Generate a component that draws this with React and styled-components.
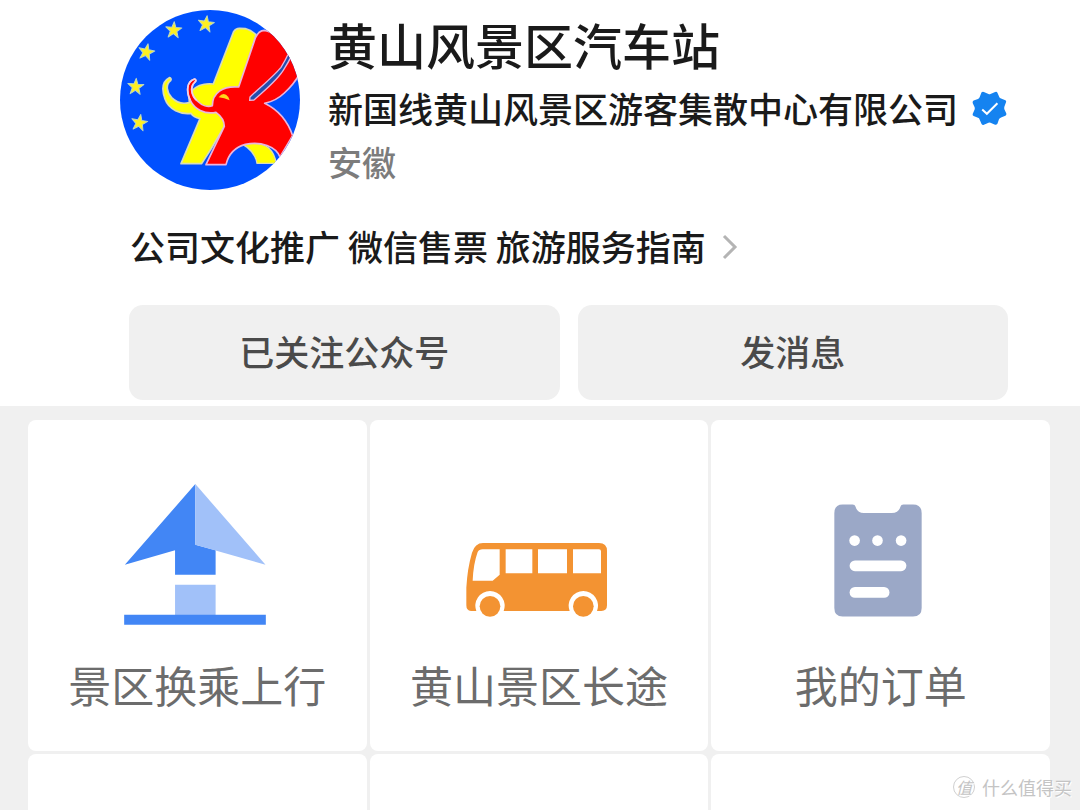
import React from 'react'
import styled, { createGlobalStyle } from 'styled-components';

const stars = [
    { x: 290, y: 73, r: 8 },
    { x: 193, y: 91, r: 4 },
    { x: 111, y: 157, r: 12 },
    { x: 79, y: 261, r: 4 },
    { x: 90, y: 369, r: 10 },
];

const STAR = '0,-25 6,-8 24,-8 10,4 15,22 0,11 -15,22 -10,4 -24,-8 -6,-8';

const Logo = () => (
    <svg viewBox="32 31 540 540" width="180" height="180" role="img" aria-label="logo">
        <defs>
            <clipPath id="disc"><circle cx="302" cy="301" r="270" /></clipPath>
        </defs>
        <circle cx="302" cy="301" r="270" fill="#0050ff" />
        <g clipPath="url(#disc)" strokeLinejoin="round">
            {
                stars.map((star) => (
                    <polygon key={star.x} points={STAR} fill="#fff020" stroke="#b9d6c0" strokeWidth="3" transform={`translate(${star.x} ${star.y}) rotate(${star.r})`} />
                ))
            }
            <path d="M373 96 Q380 85 392 86 L408 87 Q424 90 440 105 L395 262 L345 380 L305 448 L277 492 L215 492 L272 357 Q252 353 245 341 C215 345 178 330 167 298 C157 270 157 246 180 234 Q188 236 184 243 C168 255 172 278 187 294 C202 309 222 314 241 308 Q236 290 246 274 C262 258 285 250 312 253 Z" fill="#ffff00" stroke="#d8dcb8" strokeWidth="5" />
            <path d="M400 434 Q455 425 478 445 Q497 462 500 491 L443 491 Q437 455 400 434 Z" fill="#ffff00" stroke="#d8dcb8" strokeWidth="4" />
            <path d="M388 262 L438 115 Q448 92 465 92 Q505 98 555 170 L580 205 Q560 248 525 280 Q500 304 466 311 C505 330 535 365 550 408 L512 472 C500 440 455 424 408 434 C375 443 357 465 350 495 L290 495 L345 380 Q345 356 320 338 C285 345 255 328 243 302 C230 275 232 245 256 238 Q263 242 257 247 C240 262 247 288 264 304 C278 318 296 323 309 318 C309 280 340 258 388 262 Z" fill="#ff0000" stroke="#eab4dc" strokeWidth="5" />
            <path d="M242 301 C230 275 232 245 256 238 Q263 242 257 247 C240 262 247 288 262 302" fill="none" stroke="#f0d0e4" strokeWidth="5" />
            <path d="M540 156 Q528 182 515 203 C490 233 450 265 422 292 L421 302 L434 301 C468 270 505 242 525 207 Q537 188 547 168 Z" fill="#224fae" stroke="#eab4dc" strokeWidth="4" />
            <path d="M328 293 Q343 273 357 292 L361 302 Q345 294 328 293 Z" fill="#ffd51c" />
        </g>
    </svg>
)

const Verified = () => (
    <svg viewBox="814 35 106 106" width="35" height="35" role="img" aria-label="认证">
        <path d="M843 39 Q846 36 850 38 L864 44 Q867 45 870 44 L884 38 Q889 36 891 40 L897 54 Q898 57 902 58 L915 63 Q919 65 917 69 L912 83 Q911 87 912 90 L918 103 Q919 108 915 110 L902 115 Q898 117 896 120 L891 134 Q888 138 884 137 L870 131 Q867 130 864 131 L850 137 Q846 139 843 135 L837 121 Q836 117 832 116 L819 111 Q815 109 816 105 L822 91 Q823 88 822 84 L816 71 Q815 66 819 64 L832 59 Q836 57 837 54 Z" fill="#1583f0" />
        <path d="M845 91 L859 104 L891 72" fill="none" stroke="#fff" strokeWidth="6" />
    </svg>
)

const Chevron = () => (
    <svg viewBox="0 0 16 28" width="16" height="28" aria-hidden="true">
        <path d="M2 4 L13 15 L2 26" fill="none" stroke="#b4b4b4" strokeWidth="3" />
    </svg>
)

const UpArrow = () => (
    <svg viewBox="72 40 426 424" width="142" height="141" aria-hidden="true">
        <path d="M286 40 L74 283 L225 239 V313 H347 V239 L286 223 Z" fill="#4286f5" />
        <path d="M286 40 L497 283 L286 223 Z" fill="#a1c1f9" />
        <path d="M225 343 H347 V434 H225 Z" fill="#a1c1f9" />
        <path d="M72 433 H498 V463 H72 Z" fill="#4286f5" />
    </svg>
)

const Bus = () => (
    <svg viewBox="47 41 423 222" width="141" height="74" aria-hidden="true">
        <path d="M98 41 H446 Q470 41 470 65 V228 Q470 245 453 245 H440 A44 44 0 1 0 358 245 H160 A44 44 0 1 0 78 245 H62 Q48 244 48 228 V175 Q51 118 65 70 Q74 41 98 41 Z" fill="#f39332" />
        <path d="M97 60 H148 V136 L127 154 H67 Q69 104 82 68 Q86 60 97 60 Z M166 60 H246 V132 H166 Z M263 60 H350 V132 H263 Z M368 60 H446 Q452 60 452 66 V132 H368 Z" fill="#fff" />
        <circle cx="119" cy="231" r="31" fill="#f39332" />
        <circle cx="399" cy="231" r="31" fill="#f39332" />
    </svg>
)

const Order = () => (
    <svg viewBox="40 42 265 340" width="88" height="113" aria-hidden="true">
        <path d="M66 43 H96 Q103 43 105 50 Q110 69 130 69 H214 Q235 69 240 50 Q242 43 249 43 H278 Q304 43 304 69 V355 Q304 381 278 381 H66 Q41 381 41 355 V69 Q41 43 66 43 Z" fill="#9ba8c7" />
        <g fill="#fff">
            <circle cx="102" cy="152" r="16" />
            <circle cx="171" cy="152" r="16" />
            <circle cx="242" cy="152" r="16" />
            <rect x="87" y="212" width="171" height="32" rx="16" />
            <rect x="87" y="292" width="120" height="32" rx="16" />
        </g>
    </svg>
)

const services = [
    { name: '景区换乘上行', icon: <UpArrow />, drop: 0 },
    { name: '黄山景区长途', icon: <Bus />, drop: 8 },
    { name: '我的订单', icon: <Order />, drop: 8 },
];

const App = () => {
    return (
        <>
            <GlobalStyle />
            <Page>
                <Header>
                    <Profile>
                        <Logo />
                        <Info>
                            <Title>黄山风景区汽车站</Title>
                            <Company>新国线黄山风景区游客集散中心有限公司<Verified /></Company>
                            <Region>安徽</Region>
                        </Info>
                    </Profile>
                    <Summary href="#about">公司文化推广 微信售票 旅游服务指南<Chevron /></Summary>
                    <Actions>
                        <Action type="button">已关注公众号</Action>
                        <Action type="button">发消息</Action>
                    </Actions>
                </Header>
                <Services>
                    {
                        services.map((service) => (
                            <Tile key={service.name} href="#service">
                                <TileIcon $drop={service.drop}>{service.icon}</TileIcon>
                                <span>{service.name}</span>
                            </Tile>
                        ))
                    }
                    <NextTile />
                    <NextTile />
                    <NextTile />
                </Services>
                <Watermark><Seal>值</Seal>什么值得买</Watermark>
            </Page>
        </>
    )
}

const GlobalStyle = createGlobalStyle`
* {
    box-sizing: border-box;
}
body {
    margin: 0;
    background: #f0f0f0;
    font-family: "Noto Sans CJK SC", sans-serif;
}
svg {
    display: block;
    flex-shrink: 0;
}
`

const Page = styled.div`
position: relative;
display: flex;
flex-direction: column;
min-height: 100vh;
`

const Header = styled.header`
padding: 10px 72px 6px 120px;
background: #fff;
color: #1a1a1a;
`

const Profile = styled.div`
display: flex;
gap: 28px;
`

const Info = styled.div`
padding-top: 2px;
white-space: nowrap;
`

const Title = styled.h1`
margin: 0;
font-size: 49px;
font-weight: 500;
line-height: 64px;
`

const Company = styled.div`
display: flex;
align-items: center;
gap: 14px;
font-size: 35px;
font-weight: 500;
line-height: 64px;
`

const Region = styled.div`
color: #7c7c7c;
font-size: 34px;
font-weight: 500;
line-height: 44px;
`

const Summary = styled.a`
display: flex;
align-items: center;
gap: 16px;
margin: 32px 0 35px 10px;
color: inherit;
font-size: 35px;
font-weight: 500;
line-height: 48px;
text-decoration: none;
white-space: nowrap;
`

const Actions = styled.div`
display: grid;
grid-template-columns: 1fr 1fr;
gap: 18px;
margin-left: 9px;
`

const Action = styled.button`
height: 95px;
padding: 0 0 4px;
border: none;
border-radius: 14px;
background: #f0f0f0;
color: #4a4a4a;
font-family: inherit;
font-size: 35px;
font-weight: 500;
`

const Services = styled.main`
display: grid;
flex: 1;
grid-template-columns: repeat(3, 1fr);
grid-template-rows: auto minmax(56px, 1fr);
gap: 3px;
padding: 14px 30px 0 28px;
`

const Tile = styled.a`
display: flex;
flex-direction: column;
align-items: center;
padding: 64px 0 36px;
border-radius: 8px;
background: #fff;
color: #6c6c6c;
font-size: 43px;
line-height: 62px;
text-decoration: none;
white-space: nowrap;
`

const TileIcon = styled.div`
display: flex;
align-items: ${({ $drop }) => $drop ? 'flex-end' : 'flex-start'};
height: 141px;
margin: 0 5px 28px 0;
padding-bottom: ${({ $drop }) => $drop}px;
`

const NextTile = styled.div`
border-radius: 8px 8px 0 0;
background: #fff;
`

const Watermark = styled.div`
position: absolute;
right: 8px;
bottom: 11px;
display: flex;
align-items: center;
gap: 7px;
color: #c4c4c4;
font-size: 18px;
line-height: 24px;
text-shadow: 1px 1px 0 #fff;
`

const Seal = styled.span`
width: 22px;
height: 22px;
border: 1px solid #d0d0d0;
border-radius: 50%;
font-size: 16px;
font-style: italic;
line-height: 20px;
text-align: center;
`

export default App
